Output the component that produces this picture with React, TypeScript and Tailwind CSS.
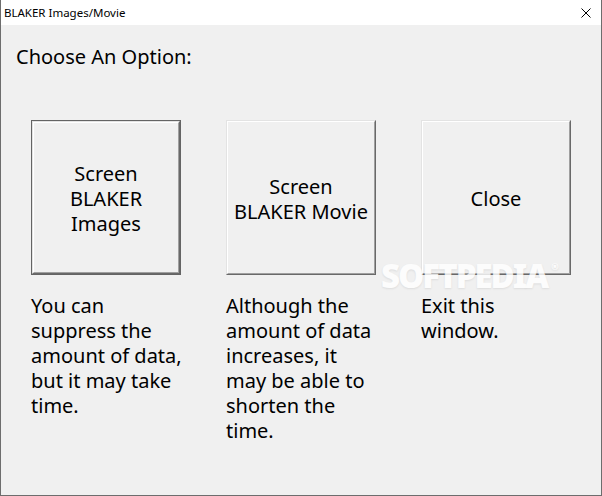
import React from "react";

const font = { fontFamily: '"Noto Sans", "Open Sans", sans-serif' };

function Btn({ lines, isDefault }: { lines: string[]; isDefault?: boolean }) {
  const inner = (
    <div className="flex h-full w-full border border-t-[#e3e3e3] border-l-[#e3e3e3] border-b-[#696969] border-r-[#696969]">
      <div className="flex flex-1 flex-col items-center justify-center border border-t-white border-l-white border-b-[#a0a0a0] border-r-[#a0a0a0] pt-[2px] text-[20px] leading-[25px] text-black">
        {lines.map((l) => (
          <div key={l} className="whitespace-nowrap">{l}</div>
        ))}
      </div>
    </div>
  );
  return (
    <div className={"h-[155px] w-[150px] " + (isDefault ? "border border-[#646464]" : "")}>
      {inner}
    </div>
  );
}

function Desc({ lines }: { lines: string[] }) {
  return (
    <div className="w-[150px] text-[20px] leading-[25px] text-black">
      {lines.map((l, i) => (
        <div key={i} className="whitespace-nowrap">{l}</div>
      ))}
    </div>
  );
}

export default function App() {
  return (
    <div style={font} className="relative flex h-[496px] w-[602px] flex-col overflow-hidden border-x border-b border-[#6d6d6d] bg-[#f0f0f0]">
      <div className="flex h-[25px] shrink-0 items-center justify-between bg-white pl-[3px] pr-[10px]">
        <span className="text-[11.5px] text-black">BLAKER Images/Movie</span>
        <svg width="10" height="10" viewBox="0 0 10 10" className="mt-[1px]">
          <path d="M0.5 0.5 L9.5 9.5 M9.5 0.5 L0.5 9.5" stroke="#000" strokeWidth="1" />
        </svg>
      </div>
      <div className="flex flex-col">
        <div className="ml-[15px] mt-[19px] text-[20px] leading-[25px] text-black">Choose An Option:</div>
        <div className="ml-[30px] mt-[51px] flex gap-[45px]">
          <Btn isDefault lines={["Screen", "BLAKER", "Images"]} />
          <Btn lines={["Screen", "BLAKER Movie"]} />
          <Btn lines={["Close"]} />
        </div>
        <div className="ml-[30px] mt-[18px] flex gap-[45px]">
          <Desc lines={["You can", "suppress the", "amount of data,", "but it may take", "time."]} />
          <Desc lines={["Although the", "amount of data", "increases, it", "may be able to", "shorten the", "time."]} />
          <Desc lines={["Exit this", "window."]} />
        </div>
      </div>
      <div
        className="pointer-events-none absolute left-[380px] top-[262px] text-[33px] font-black leading-[28px] tracking-[-2px] text-white"
        style={{ textShadow: "0 1px 2px rgba(0,0,0,0.10)", opacity: 0.8 }}
      >
        SOFTPEDIA<span className="ml-[4px] align-top text-[9px] leading-none">®</span>
      </div>
    </div>
  );
}
